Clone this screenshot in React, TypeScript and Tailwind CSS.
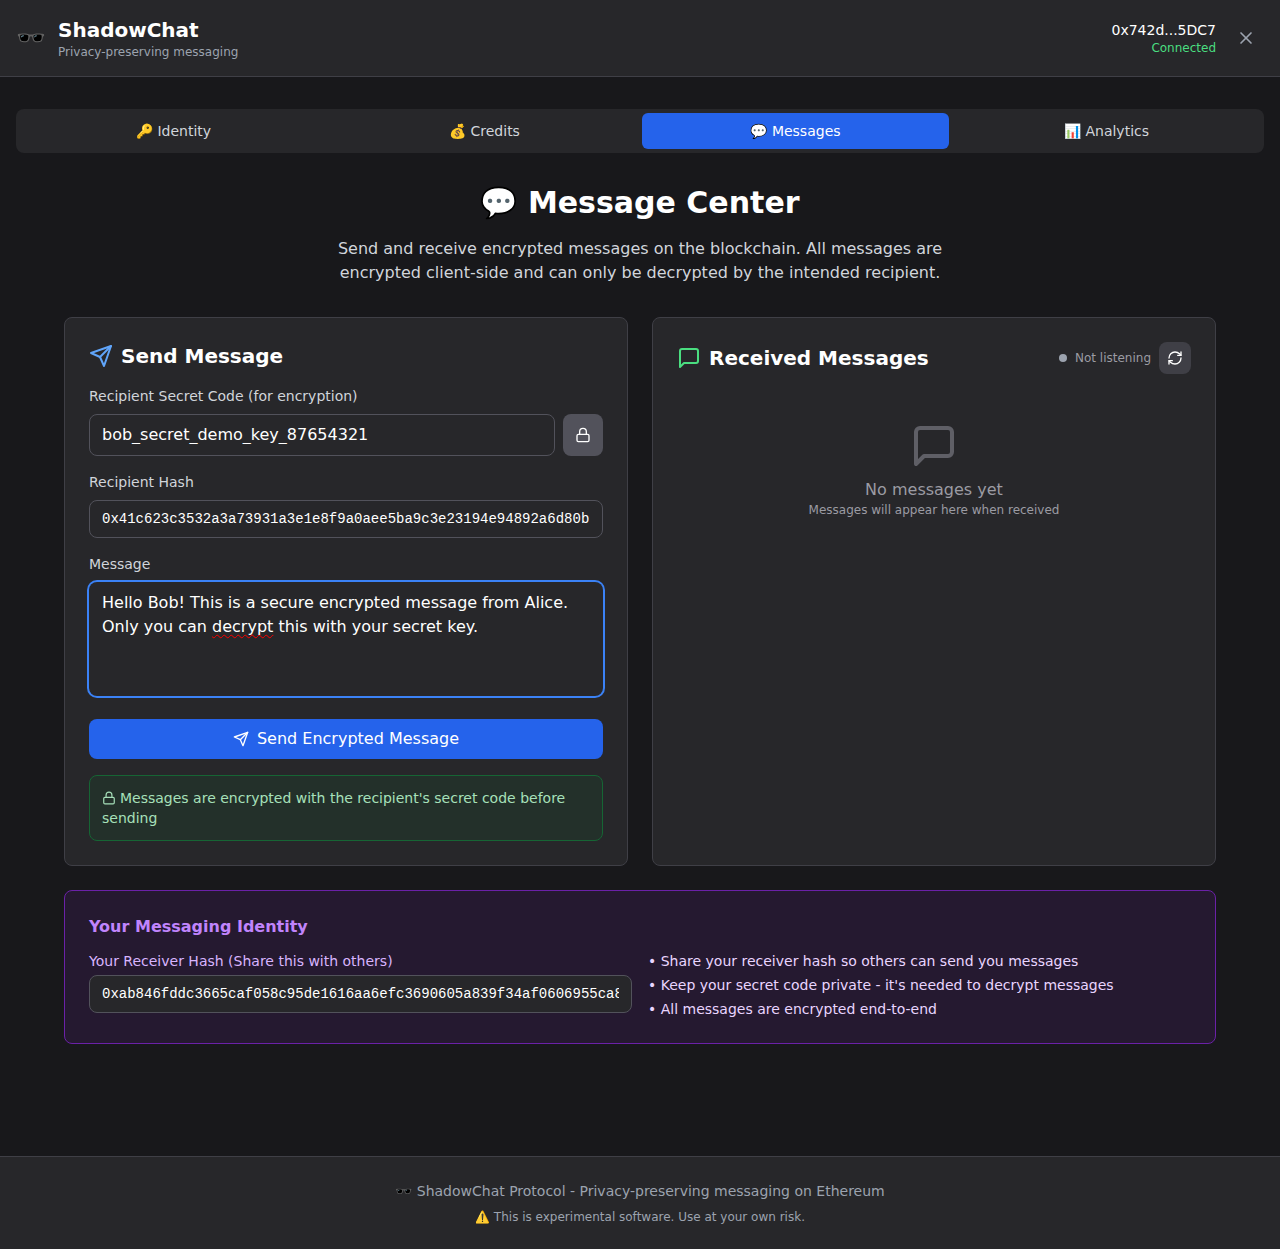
import React from "react";
import { Lock, RefreshCw, X } from "lucide-react";

const SendIcon = ({ className }: { className: string }) => (
  <svg className={className} viewBox="0 0 24 24" fill="none" stroke="currentColor" strokeWidth="2" strokeLinecap="round" strokeLinejoin="round">
    <path d="m22 2-7 20-4-9-9-4Z" />
    <path d="M22 2 11 13" />
  </svg>
);

const ChatIcon = ({ className }: { className: string }) => (
  <svg className={className} viewBox="0 0 24 24" fill="none" stroke="currentColor" strokeWidth="2" strokeLinecap="round" strokeLinejoin="round">
    <path d="M21 15a2 2 0 0 1-2 2H7l-4 4V5a2 2 0 0 1 2-2h14a2 2 0 0 1 2 2z" />
  </svg>
);

const tabs = [
  { label: "🔑 Identity", active: false },
  { label: "💰 Credits", active: false },
  { label: "💬 Messages", active: true },
  { label: "📊 Analytics", active: false },
];

const App: React.FC = () => {
  return (
    <div className="min-h-screen flex flex-col bg-[#18181b] text-white font-['DejaVu_Sans',sans-serif]">
      {/* Header */}
      <header className="h-[77px] flex items-center justify-between px-4 bg-[#27272a] border-b border-[#3f3f46]">
        <div className="flex items-center gap-3">
          <span className="text-2xl leading-8">🕶️</span>
          <div>
            <h1 className="text-xl font-bold leading-7">ShadowChat</h1>
            <p className="text-xs leading-4 text-[#9ca3af]">Privacy-preserving messaging</p>
          </div>
        </div>
        <div className="flex items-center gap-3">
          <div className="text-right">
            <div className="text-sm leading-5">0x742d...5DC7</div>
            <div className="text-xs leading-4 text-[#4ade80]">Connected</div>
          </div>
          <button className="p-2 text-[#9ca3af]">
            <X className="w-5 h-5" />
          </button>
        </div>
      </header>

      {/* Main */}
      <main className="flex-1 px-4 py-8">
        <nav className="flex gap-1 p-1 mb-8 bg-[#27272a] rounded-lg">
          {tabs.map((tab) => (
            <button
              key={tab.label}
              className={`flex-1 h-9 rounded-md text-sm ${
                tab.active ? "bg-[#2563eb] text-white" : "text-[#d1d5db]"
              }`}
            >
              {tab.label}
            </button>
          ))}
        </nav>

        <div className="max-w-6xl mx-auto">
          <div className="text-center mb-8">
            <h2 className="text-3xl leading-9 font-bold mb-4">💬 Message Center</h2>
            <p className="max-w-2xl mx-auto text-base leading-6 text-[#d1d5db]">
              Send and receive encrypted messages on the blockchain. All messages are encrypted
              client-side and can only be decrypted by the intended recipient.
            </p>
          </div>

          <div className="grid grid-cols-2 gap-6">
            {/* Send */}
            <section className="p-6 bg-[#27272a] border border-[#3f3f46] rounded-lg">
              <h3 className="flex items-center gap-2 text-xl leading-7 font-bold mb-4">
                <SendIcon className="w-6 h-6 text-[#60a5fa]" />
                Send Message
              </h3>
              <label className="block text-sm leading-5 text-[#d1d5db] mb-2">
                Recipient Secret Code (for encryption)
              </label>
              <div className="flex gap-2 mb-4">
                <input
                  readOnly
                  value="bob_secret_demo_key_87654321"
                  className="flex-1 min-w-0 h-[42px] px-3 pt-[7px] pb-[9px] text-base text-white bg-[#27272a] border border-[#52525b] rounded-lg outline-none"
                />
                <button className="w-10 h-[42px] flex items-center justify-center bg-[#52525b] rounded-lg">
                  <Lock className="w-4 h-4" />
                </button>
              </div>
              <label className="block text-sm leading-5 text-[#d1d5db] mb-2">Recipient Hash</label>
              <input
                readOnly
                value="0x41c623c3532a3a73931a3e1e8f9a0aee5ba9c3e23194e94892a6d80b"
                className="block w-full h-[38px] px-3 py-2 mb-4 text-sm text-white font-['Liberation_Mono',monospace] bg-[#27272a] border border-[#52525b] rounded-lg outline-none"
              />
              <label className="block text-sm leading-5 text-[#d1d5db] mb-2">Message</label>
              <div className="h-[114px] px-3 py-2 mb-[23px] text-base leading-6 bg-[#27272a] border border-transparent rounded-lg ring-2 ring-[#3b82f6]">
                Hello Bob! This is a secure encrypted message from Alice.
                <br />
                Only you can{" "}
                <span className="underline decoration-wavy decoration-[#ff0000] decoration-1 underline-offset-2 [text-decoration-skip-ink:none]">decrypt</span>{" "}
                this with your secret key.
              </div>
              <button className="w-full h-10 mb-4 flex items-center justify-center gap-2 text-base bg-[#2563eb] rounded-lg">
                <SendIcon className="w-4 h-4" />
                Send Encrypted Message
              </button>
              <div className="p-3 text-sm leading-5 text-[#a7e0ba] bg-[#14532d]/20 border border-[#166534] rounded-lg">
                <Lock className="inline w-3.5 h-3.5 mr-1 align-[-2px]" />
                Messages are encrypted with the recipient's secret code before sending
              </div>
            </section>

            {/* Received */}
            <section className="p-6 bg-[#27272a] border border-[#3f3f46] rounded-lg">
              <div className="flex items-center justify-between">
                <h3 className="flex items-center gap-2 text-xl leading-7 font-bold">
                  <ChatIcon className="w-6 h-6 text-[#4ade80]" />
                  Received Messages
                </h3>
                <div className="flex items-center gap-2">
                  <span className="w-2 h-2 rounded-full bg-[#9ca3af]" />
                  <span className="text-xs leading-4 text-[#9b9ba3]">Not listening</span>
                  <button className="w-8 h-8 flex items-center justify-center bg-[#3f3f46] rounded-lg">
                    <RefreshCw className="w-4 h-4" />
                  </button>
                </div>
              </div>
              <div className="flex flex-col items-center py-12 text-[#9b9ba3]">
                <ChatIcon className="w-12 h-12 mb-2 text-[#5f5f66]" />
                <p className="text-base leading-6">No messages yet</p>
                <p className="text-xs leading-4">Messages will appear here when received</p>
              </div>
            </section>
          </div>

          {/* Identity */}
          <section className="mt-6 p-6 bg-[#581c87]/20 border border-[#6b21a8] rounded-lg">
            <h3 className="text-base leading-6 font-bold text-[#c084fc] mb-3">Your Messaging Identity</h3>
            <div className="grid grid-cols-2 gap-4">
              <div>
                <label className="block text-sm leading-5 text-[#d8b4fe] mb-1">
                  Your Receiver Hash (Share this with others)
                </label>
                <input
                  readOnly
                  value="0xab846fddc3665caf058c95de1616aa6efc3690605a839f34af0606955ca8d2e14b7c"
                  className="block w-full h-[38px] px-3 py-2 text-sm text-white font-['Liberation_Mono',monospace] bg-[#27272a] border border-[#52525b] rounded-lg outline-none"
                />
              </div>
              <ul className="space-y-1 text-sm leading-5 text-[#e9d5ff]">
                <li>• Share your receiver hash so others can send you messages</li>
                <li>• Keep your secret code private - it's needed to decrypt messages</li>
                <li>• All messages are encrypted end-to-end</li>
              </ul>
            </div>
          </section>
        </div>
      </main>

      {/* Footer */}
      <footer className="py-6 text-center bg-[#27272a] border-t border-[#3f3f46] text-[#9ca3af]">
        <p className="text-sm leading-5">🕶️ ShadowChat Protocol - Privacy-preserving messaging on Ethereum</p>
        <p className="text-xs leading-4 mt-2">⚠️ This is experimental software. Use at your own risk.</p>
      </footer>
    </div>
  );
};

export default App;
